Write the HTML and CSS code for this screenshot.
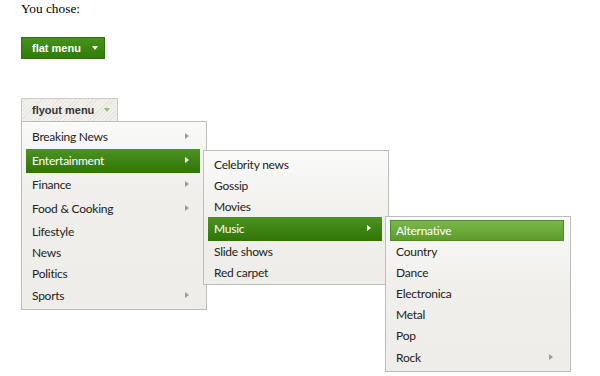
FILE: index.html
```html
<!DOCTYPE html>
<html lang="en">
<head>
<meta charset="utf-8">
<title>Menus</title>
<link rel="stylesheet" href="styles.css">
</head>
<body>
<p class="choice">You chose:</p>

<div class="flat-wrap">
  <button class="btn btn-flat" type="button">flat menu <span class="caret caret-white"></span></button>
</div>

<div class="flyout">
  <button class="btn btn-flyout" type="button">flyout menu <span class="caret caret-green"></span></button>
  <ul class="menu menu-root">
    <li class="item has-sub"><span>Breaking News</span><i class="arrow"></i></li>
    <li class="item has-sub is-active"><span>Entertainment</span><i class="arrow"></i>
      <ul class="menu submenu sub-ent">
        <li class="item"><span>Celebrity news</span></li>
        <li class="item"><span>Gossip</span></li>
        <li class="item"><span>Movies</span></li>
        <li class="item has-sub is-active"><span>Music</span><i class="arrow"></i>
          <ul class="menu submenu sub-music">
            <li class="item is-hover"><span>Alternative</span></li>
            <li class="item"><span>Country</span></li>
            <li class="item"><span>Dance</span></li>
            <li class="item"><span>Electronica</span></li>
            <li class="item"><span>Metal</span></li>
            <li class="item"><span>Pop</span></li>
            <li class="item has-sub"><span>Rock</span><i class="arrow"></i></li>
          </ul>
        </li>
        <li class="item"><span>Slide shows</span></li>
        <li class="item"><span>Red carpet</span></li>
      </ul>
    </li>
    <li class="item has-sub"><span>Finance</span><i class="arrow"></i></li>
    <li class="item has-sub"><span>Food &amp; Cooking</span><i class="arrow"></i></li>
    <li class="item"><span>Lifestyle</span></li>
    <li class="item"><span>News</span></li>
    <li class="item"><span>Politics</span></li>
    <li class="item has-sub"><span>Sports</span><i class="arrow"></i></li>
  </ul>
</div>
</body>
</html>
```

FILE: styles.css
```css
html {
  background: #ffffff;
  min-height: 100%;
}

body {
  box-sizing: border-box;
  min-height: 376px;
  margin: 0;
  padding: 1px 0 0 21px;
  font-family: "Liberation Serif", "Times New Roman", serif;
  color: #000;
  background: #ffffff;
}

.choice {
  margin: 0;
  font-size: 13.33px;
  line-height: 15px;
}

.flat-wrap {
  margin-top: 21px;
  display: flex;
}

.btn {
  box-sizing: border-box;
  display: inline-flex;
  align-items: center;
  margin: 0;
  font-family: "Liberation Sans", Arial, sans-serif;
  font-size: 11px;
  font-weight: bold;
  line-height: 20px;
  cursor: pointer;
  -webkit-appearance: none;
  appearance: none;
}

.btn-flat {
  height: 22px;
  color: #ffffff;
  background: linear-gradient(#45921b, #317c09);
  border: 1px solid #2e700c;
  gap: 11px;
  padding: 0 6px 0 10px;
}

.flyout {
  margin-top: 39px;
  display: flex;
  flex-direction: column;
  align-items: flex-start;
}

.btn-flyout {
  height: 23px;
  color: #333333;
  border: 1px solid #c9c9c6;
  border-bottom: 0;
  gap: 10px;
  padding: 0 7px 0 10px;
  background-color: #eeede8;
  background-image: repeating-linear-gradient(135deg, #f1f0ec 0 2px, #e5e4de 2px 3px);
}

.caret {
  width: 0;
  height: 0;
  border-left: 3.5px solid transparent;
  border-right: 3.5px solid transparent;
  border-top: 4px solid #ffffff;
}

.caret-green {
  border-top-color: #90c266;
}

.menu {
  box-sizing: border-box;
  width: 186px;
  margin: 0;
  padding: 3px 6px 1px 4px;
  list-style: none;
  border: 1px solid #bdbdba;
  background: linear-gradient(#fafaf9, #f0efeb 70px, #eeede9);
  font-family: Lato, "Open Sans", sans-serif;
  font-size: 12px;
  letter-spacing: -0.25px;
}

.menu-root {
  position: relative;
}

.item {
  box-sizing: border-box;
  position: relative;
  display: flex;
  align-items: center;
  justify-content: space-between;
  height: 21px;
  padding: 0 0 0 6px;
  line-height: 17px;
  color: #222222;
  white-space: nowrap;
}

.item.has-sub {
  height: 24px;
  padding-bottom: 2px;
}

.arrow {
  width: 0;
  height: 0;
  margin-right: 11px;
  border-top: 3.5px solid transparent;
  border-bottom: 3.5px solid transparent;
  border-left: 4px solid #9c9c9a;
}

.item.is-active {
  color: #ffffff;
  background: linear-gradient(#4c9322, #2e7506);
}

.item.is-active > .arrow {
  border-left-color: #ffffff;
}

.item.is-hover {
  padding-left: 5px;
  color: #ffffff;
  background: linear-gradient(#7cb74a, #5b9c2c);
  border: 1px solid #4f8c27;
}

.submenu {
  position: absolute;
  left: calc(100% + 3px);
  top: 1px;
  z-index: 2;
}

.sub-music {
  top: -1px;
}
```
